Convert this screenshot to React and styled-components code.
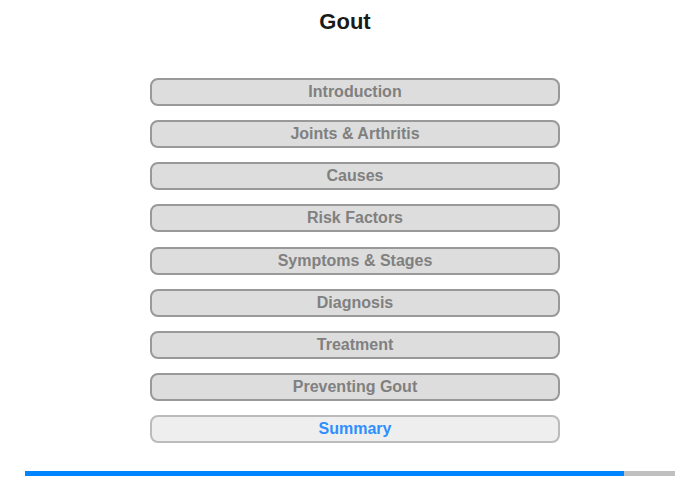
import styled, { createGlobalStyle } from "styled-components";

const sections = [
  "Introduction",
  "Joints & Arthritis",
  "Causes",
  "Risk Factors",
  "Symptoms & Stages",
  "Diagnosis",
  "Treatment",
  "Preventing Gout",
  "Summary",
];

const current = "Summary";
const progress = 599 / 650;

const GlobalStyle = createGlobalStyle`
  body {
    margin: 0;
    background: #fff;
    font-family: "Liberation Sans", Arial, sans-serif;
  }
`;

const Page = styled.div`
  width: 700px;
  height: 480px;
  display: flex;
  flex-direction: column;
`;

const Title = styled.h1`
  margin: 0;
  padding: 9px 10px 0 0;
  font-size: 22px;
  line-height: 26px;
  font-weight: bold;
  color: #1a1a1a;
  text-align: center;
`;

const Menu = styled.nav`
  margin-top: 43px;
  padding-left: 10px;
  display: flex;
  flex-direction: column;
  align-items: center;
  gap: 14.125px;
`;

const SectionButton = styled.button`
  box-sizing: border-box;
  width: 410px;
  height: 28px;
  padding: 0;
  border: 2px solid ${({ $active }) => ($active ? "#bbbbbb" : "#999999")};
  border-radius: 8px;
  background: ${({ $active }) => ($active ? "#eeeeee" : "#dddddd")};
  color: ${({ $active }) => ($active ? "#2e8fff" : "#808080")};
  font-family: inherit;
  font-size: 16px;
  font-weight: bold;
  line-height: 24px;
  text-align: center;
  cursor: pointer;
`;

const ProgressTrack = styled.div`
  margin: 28px 25px 0;
  height: 5px;
  background: #c0c0c0;
`;

const ProgressFill = styled.div`
  height: 100%;
  background: #0084ff;
`;

export default function App() {
  return (
    <>
      <GlobalStyle />
      <Page>
        <Title>Gout</Title>
        <Menu>
          {sections.map((name) => (
            <SectionButton key={name} $active={name === current}>
              {name}
            </SectionButton>
          ))}
        </Menu>
        <ProgressTrack>
          <ProgressFill style={{ width: `${progress * 100}%` }} />
        </ProgressTrack>
      </Page>
    </>
  );
}
